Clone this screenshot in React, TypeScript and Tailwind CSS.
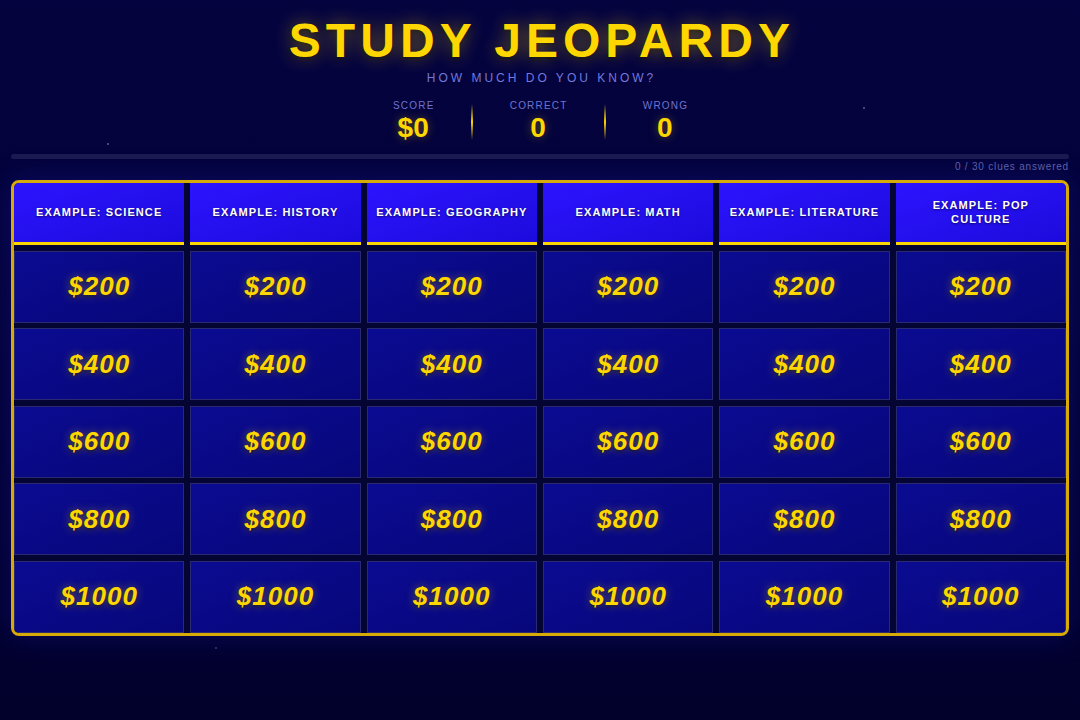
import React from 'react';

const categories = [
  'Example: Science',
  'Example: History',
  'Example: Geography',
  'Example: Math',
  'Example: Literature',
  'Example: Pop Culture',
];

const values = [200, 400, 600, 800, 1000];

const stats = [
  { label: 'Score', value: '$0' },
  { label: 'Correct', value: '0' },
  { label: 'Wrong', value: '0' },
];

const App: React.FC = () => {
  return (
    <div className="relative min-h-screen w-full overflow-hidden bg-gradient-to-b from-[#04033f] via-[#030238] to-[#02012c] font-['Liberation_Sans',Arial,sans-serif]">
      {/* Stars */}
      <div className="absolute left-[107px] top-[143px] h-[2px] w-[2px] rounded-full bg-[#5a5aa0]" />
      <div className="absolute left-[863px] top-[107px] h-[2px] w-[2px] rounded-full bg-[#5a5aa0]" />
      <div className="absolute left-[215px] top-[647px] h-[2px] w-[2px] rounded-full bg-[#3a3a80]" />

      <div className="px-[11px] pt-[17px]">
        {/* Header */}
        <div className="text-center">
          <h1 className="pl-[0.1em] pr-[0.02em] text-[48px] font-bold leading-none tracking-[0.105em] text-[#ffd700] [text-shadow:0_0_18px_rgba(255,215,0,0.45),0_2px_4px_rgba(0,0,0,0.6)]">
            STUDY JEOPARDY
          </h1>
          <p className="mt-[5px] pl-[0.25em] text-[12px] leading-4 tracking-[0.25em] text-[#7378dc]">
            HOW MUCH DO YOU KNOW?
          </p>
        </div>

        {/* Stats */}
        <div className="mt-[14px] flex items-center justify-center gap-[36px]">
          {stats.map((s, i) => (
            <React.Fragment key={s.label}>
              {i > 0 && (
                <div className="h-[36px] w-[2px] bg-gradient-to-b from-transparent via-[#ffd700] to-transparent" />
              )}
              <div className="flex flex-col items-center">
                <div className="pl-[0.12em] text-[10px] uppercase leading-3 tracking-[0.12em] text-[#6f74d0]">
                  {s.label}
                </div>
                <div className="text-[28px] font-bold leading-8 text-[#ffd700] [text-shadow:0_0_10px_rgba(255,215,0,0.35)]">
                  {s.value}
                </div>
              </div>
            </React.Fragment>
          ))}
        </div>

        {/* Progress */}
        <div className="mt-[10px] h-[5px] w-full rounded-full bg-[#1b1b50]">
          <div className="h-full w-0 rounded-full bg-[#ffd700]" />
        </div>
        <div className="mt-[2px] text-right text-[10px] leading-3 tracking-[0.08em] text-[#5c60a8]">
          0 / 30 clues answered
        </div>

        {/* Board */}
        <div className="mt-[7px] overflow-hidden rounded-[8px] border-[3px] border-[#d8aa08] bg-[#050533] shadow-[0_0_30px_rgba(40,40,220,0.25)]">
          <div className="grid grid-cols-6 gap-x-[6px] gap-y-[5.5px]">
            {categories.map((c) => (
              <div
                key={c}
                className="flex h-[62px] items-center justify-center border-b-[3px] border-[#ffd700] bg-gradient-to-br from-[#2c14ff] to-[#1c0bdc] px-2 pb-[2px] text-center text-[11px] font-bold uppercase leading-[14px] tracking-[0.1em] text-white [text-shadow:0_1px_2px_rgba(0,0,0,0.6)]"
              >
                {c}
              </div>
            ))}
            {values.map((v) =>
              categories.map((c) => (
                <div
                  key={`${c}-${v}`}
                  className="flex h-[72px] items-center justify-center border border-[#2a2a72] bg-gradient-to-br from-[#0b0b92] to-[#07077a]"
                >
                  <span className="text-[26px] font-bold italic tracking-[0.04em] text-[#ffd700] [text-shadow:0_0_10px_rgba(255,215,0,0.4),0_2px_3px_rgba(0,0,0,0.5)]">
                    ${v}
                  </span>
                </div>
              ))
            )}
          </div>
        </div>
      </div>
    </div>
  );
};

export default App;
